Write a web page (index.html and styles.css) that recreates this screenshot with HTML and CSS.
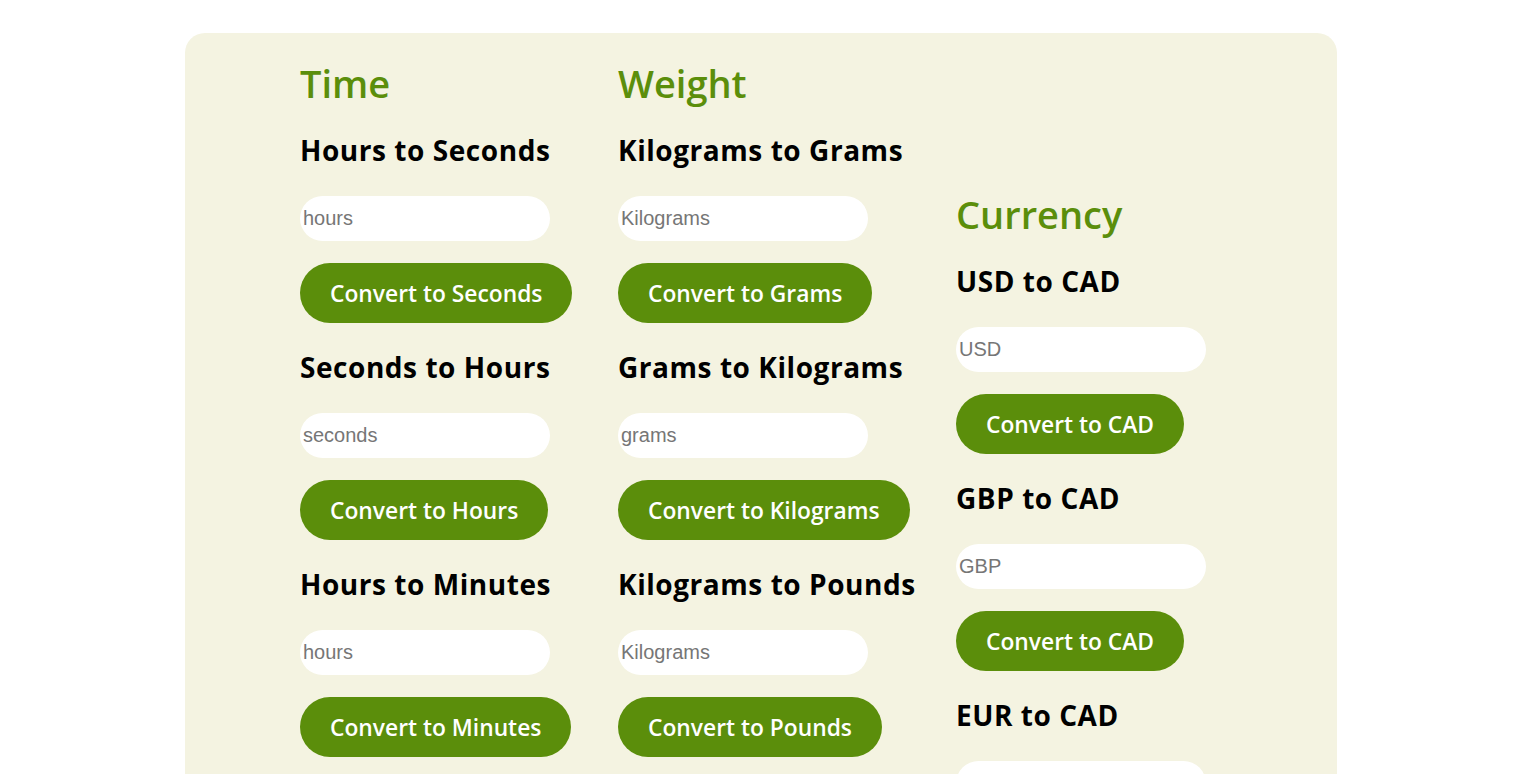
FILE: index.html
```html
<!DOCTYPE html>
<html lang="en">
<head>
<meta charset="utf-8">
<title>Unit Converter</title>
<link rel="stylesheet" href="styles.css">
</head>
<body>
<main class="panel">
  <section class="col col-time">
    <h2 class="cat">Time</h2>
    <div class="conv">
      <h3 class="conv-title">Hours to Seconds</h3>
      <input class="field" type="text" placeholder="hours">
      <button class="btn">Convert to Seconds</button>
    </div>
    <div class="conv">
      <h3 class="conv-title">Seconds to Hours</h3>
      <input class="field" type="text" placeholder="seconds">
      <button class="btn">Convert to Hours</button>
    </div>
    <div class="conv">
      <h3 class="conv-title">Hours to Minutes</h3>
      <input class="field" type="text" placeholder="hours">
      <button class="btn">Convert to Minutes</button>
    </div>
    <div class="conv">
      <h3 class="conv-title">Minutes to Hours</h3>
      <input class="field" type="text" placeholder="minutes">
      <button class="btn">Convert to Hours</button>
    </div>
  </section>
  <section class="col col-weight">
    <h2 class="cat">Weight</h2>
    <div class="conv">
      <h3 class="conv-title">Kilograms to Grams</h3>
      <input class="field" type="text" placeholder="Kilograms">
      <button class="btn">Convert to Grams</button>
    </div>
    <div class="conv">
      <h3 class="conv-title">Grams to Kilograms</h3>
      <input class="field" type="text" placeholder="grams">
      <button class="btn">Convert to Kilograms</button>
    </div>
    <div class="conv">
      <h3 class="conv-title">Kilograms to Pounds</h3>
      <input class="field" type="text" placeholder="Kilograms">
      <button class="btn">Convert to Pounds</button>
    </div>
    <div class="conv">
      <h3 class="conv-title">Pounds to Kilograms</h3>
      <input class="field" type="text" placeholder="pounds">
      <button class="btn">Convert to Kilograms</button>
    </div>
  </section>
  <section class="col col-currency">
    <h2 class="cat">Currency</h2>
    <div class="conv">
      <h3 class="conv-title">USD to CAD</h3>
      <input class="field" type="text" placeholder="USD">
      <button class="btn">Convert to CAD</button>
    </div>
    <div class="conv">
      <h3 class="conv-title">GBP to CAD</h3>
      <input class="field" type="text" placeholder="GBP">
      <button class="btn">Convert to CAD</button>
    </div>
    <div class="conv">
      <h3 class="conv-title">EUR to CAD</h3>
      <input class="field" type="text" placeholder="EUR">
      <button class="btn">Convert to CAD</button>
    </div>
  </section>
</main>
</body>
</html>
```
FILE: styles.css
```css
html, body {
  margin: 0;
  padding: 0;
  background: #ffffff;
}

body {
  padding: 8px;
  font-family: "Open Sans", "Noto Sans", "DejaVu Sans", sans-serif;
}

.panel {
  box-sizing: border-box;
  width: 1152px;
  margin: 25px 0 0 177px;
  padding: 26px 0 40px 115px;
  background: #f4f3e1;
  border-radius: 20px;
  display: flex;
  align-items: flex-start;
}

.col {
  display: flex;
  flex-direction: column;
  align-items: flex-start;
}

.col-time { width: 318px; }
.col-weight { width: 338px; }
.col-currency { padding-top: 131px; }

.cat {
  margin: 0;
  font-size: 38px;
  line-height: 48px;
  font-weight: 600;
  color: #5b8e0b;
}

.conv {
  display: flex;
  flex-direction: column;
  align-items: flex-start;
  padding-top: 26px;
}

.conv + .conv {
  padding-top: 27px;
}

.conv-title {
  margin: 0 0 29px;
  font-size: 28px;
  line-height: 34px;
  font-weight: 700;
  letter-spacing: 0.55px;
  color: #000000;
}

.field {
  box-sizing: border-box;
  width: 250px;
  height: 45px;
  margin: 0 0 22px;
  padding: 0 3px;
  border: none;
  border-radius: 23px;
  background: #ffffff;
  font-family: "Liberation Sans", Arial, sans-serif;
  font-size: 20px;
  color: #000000;
  outline: none;
}

.field::placeholder {
  color: #767676;
}

.btn {
  height: 60px;
  padding: 0 30px;
  border: none;
  border-radius: 30px;
  background: #5b8e0b;
  color: #ffffff;
  font-family: "Open Sans", "Noto Sans", sans-serif;
  font-size: 22.8px;
  font-weight: 600;
  cursor: pointer;
}
```
